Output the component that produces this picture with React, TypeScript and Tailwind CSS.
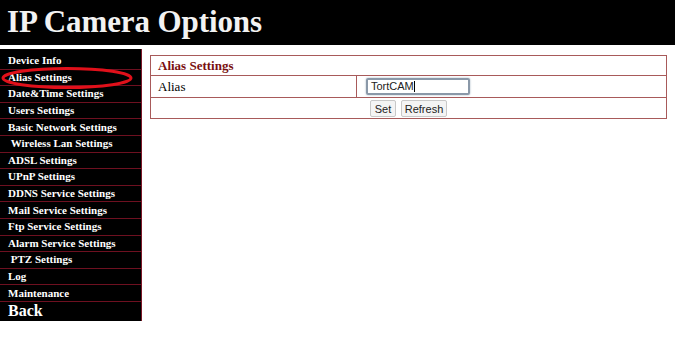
import React from "react";

const menu = [
  "Device Info",
  "Alias Settings",
  "Date&Time Settings",
  "Users Settings",
  "Basic Network Settings",
  "\u00a0Wireless Lan Settings",
  "ADSL Settings",
  "UPnP Settings",
  "DDNS Service Settings",
  "Mail Service Settings",
  "Ftp Service Settings",
  "Alarm Service Settings",
  "\u00a0PTZ Settings",
  "Log",
  "Maintenance",
];

export default function App() {
  return (
    <div className="relative w-[675px] h-[339px] bg-white overflow-hidden font-['Liberation_Serif',serif]">
      <div className="h-[45px] bg-black flex items-center pl-[7px] pb-[3px]">
        <h1 className="text-[31px] font-bold text-[#f2f2f2] leading-none tracking-[-0.1px]">IP Camera Options</h1>
      </div>
      <div className="flex items-start mt-[4px]">
        <div className="w-[142px] bg-black border-r border-[#7a1828] pt-[4px]">
          {menu.map((item) => (
            <div
              key={item}
              className="h-[16.6px] border-b border-[#6e1020] pl-[8px] flex items-center text-[11px] font-bold text-white leading-none whitespace-pre"
            >
              {item}
            </div>
          ))}
          <div className="h-[19px] pl-[8px] flex items-center text-[16px] font-bold text-white leading-none">
            Back
          </div>
        </div>
        <div className="ml-[8px] mt-[6px] w-[517px] border border-[#a85a5a]">
          <div className="h-[20px] border-b border-[#a85a5a] px-[7px] flex items-center text-[13px] font-bold text-[#7a1010]">
            Alias Settings
          </div>
          <div className="h-[22px] border-b border-[#a85a5a] flex text-[13px] text-black">
            <div className="w-[206px] border-r border-[#a85a5a] px-[7px] flex items-center">Alias</div>
            <div className="flex-1 flex items-center pl-[9px]">
              <div className="w-[104px] h-[17px] border-2 border-[#8a98a8] rounded-[2px] flex items-center pl-[3px] text-[11px] font-['Liberation_Sans',sans-serif] text-[#222] shadow-[0_0_2px_#9ab]">
                TortCAM<span className="w-px h-[11px] bg-black" />
              </div>
            </div>
          </div>
          <div className="h-[20px] flex items-center justify-center gap-[5px] font-['Liberation_Sans',sans-serif] text-[11px] text-[#222]">
            <button className="h-[17px] w-[26px] bg-[#f4f4f4] border border-[#c8c8c8] rounded-[2px]">Set</button>
            <button className="h-[17px] w-[46px] bg-[#f4f4f4] border border-[#c8c8c8] rounded-[2px]">Refresh</button>
          </div>
        </div>
      </div>
      <svg className="absolute left-0 top-[66px]" width="140" height="26" viewBox="0 0 140 26">
        <ellipse cx="67" cy="12" rx="64" ry="9.5" fill="none" stroke="#e0101a" strokeWidth="3" />
      </svg>
    </div>
  );
}
